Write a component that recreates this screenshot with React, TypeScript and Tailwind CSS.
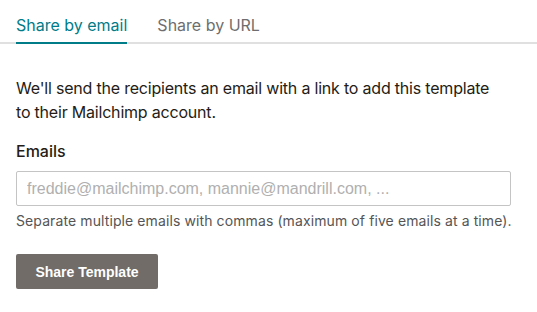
import { useState } from "react";

export default function App() {
  const [tab, setTab] = useState<"email" | "url">("email");
  const [emails, setEmails] = useState("");

  return (
    <div
      className="w-[537px] h-[312px] bg-white text-[#241c15]"
      style={{ fontFamily: 'Inter, "Liberation Sans", Arial, sans-serif' }}
    >
      <div className="flex gap-[30px] pl-4 border-b-2 border-[#e0e0e0]">
        <button
          className={`-mb-[2px] pt-[13px] pb-[5px] border-b-2 text-base leading-6 ${
            tab === "email"
              ? "border-[#007c89] text-[#007c89]"
              : "border-transparent text-[#6e6e6e]"
          }`}
          onClick={() => setTab("email")}
        >
          Share by email
        </button>
        <button
          className={`-mb-[2px] pt-[13px] pb-[5px] border-b-2 text-base leading-6 ${
            tab === "url"
              ? "border-[#007c89] text-[#007c89]"
              : "border-transparent text-[#6e6e6e]"
          }`}
          onClick={() => setTab("url")}
        >
          Share by URL
        </button>
      </div>

      <div className="px-4 pt-8">
        <p className="text-base leading-6 w-[490px] tracking-[-0.2px]">
          We'll send the recipients an email with a link to add this template
          to their Mailchimp account.
        </p>

        <label className="block mt-[15px] mb-2 text-base leading-6 font-medium">
          Emails
        </label>
        <input
          className="w-[495px] h-[35px] px-[10px] border border-[#c4c4c4] rounded-[2px] text-base text-[#241c15] placeholder:text-[#b0b0b0] outline-none"
          style={{ fontFamily: '"Liberation Sans", Arial, sans-serif' }}
          placeholder="freddie@mailchimp.com, mannie@mandrill.com, ..."
          value={emails}
          onChange={(e) => setEmails(e.target.value)}
        />
        <p className="mt-[5px] text-sm leading-5 text-[#555] tracking-[0.1px]">
          Separate multiple emails with commas (maximum of five emails at a time).
        </p>

        <button
          className="mt-[23px] w-[142px] h-[35px] rounded-[2px] bg-[#716c68] text-white text-sm font-bold"
          style={{ fontFamily: '"Liberation Sans", Arial, sans-serif' }}
        >
          Share Template
        </button>
      </div>
    </div>
  );
}
